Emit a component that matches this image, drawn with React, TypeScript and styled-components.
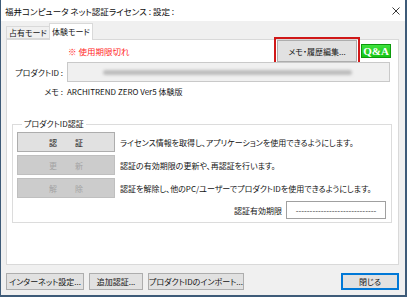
import React from "react";
import styled, { createGlobalStyle } from "styled-components";

const Global = createGlobalStyle`
  html, body { margin: 0; padding: 0; background: #ffffff; }
  body {
    font-family: "Noto Sans CJK JP", "Noto Sans", sans-serif;
    font-size: 8px;
    color: #141414;
  }
  * { box-sizing: border-box; }
`;

const Window = styled.div`
  width: 407px;
  height: 297px;
  display: flex;
  flex-direction: column;
  background: #f0f0f0;
  border-left: 1px solid #3e5b78;
  border-right: 2px solid #3e5b78;
  border-bottom: 2px solid #3e5b78;
  font-feature-settings: "palt";
  overflow: hidden;
`;

const TitleBar = styled.div`
  height: 21px;
  flex: none;
  background: #ffffff;
  display: flex;
  align-items: center;
  justify-content: space-between;
  padding: 0 5px 0 4px;
  font-size: 8.5px;
  color: #0c0c0c;
`;

const CloseIcon = styled.svg`
  width: 8px;
  height: 8px;
  display: block;
`;

const Body = styled.div`
  flex: 1;
  display: flex;
  flex-direction: column;
  padding: 2px 6px 0 5px;
`;

const TabStrip = styled.div`
  height: 16px;
  display: flex;
  align-items: flex-end;
  position: relative;
  z-index: 1;
`;

const Tab = styled.div<{ $active?: boolean }>`
  width: ${(p) => (p.$active ? 44 : 43)}px;
  height: ${(p) => (p.$active ? 17 : 13)}px;
  margin-bottom: ${(p) => (p.$active ? -1 : 0)}px;
  display: flex;
  align-items: center;
  justify-content: center;
  background: ${(p) => (p.$active ? "#ffffff" : "#f0f0f0")};
  border: 1px solid #d9d9d9;
  border-bottom: ${(p) => (p.$active ? "none" : "1px solid #d9d9d9")};
  ${(p) => (p.$active ? "" : "border-right: none;")}
  padding-bottom: ${(p) => (p.$active ? 2 : 0)}px;
`;

const Panel = styled.div`
  height: 226px;
  background: #ffffff;
  border: 1px solid #d9d9d9;
  display: flex;
  flex-direction: column;
`;

const TopRow = styled.div`
  height: 22px;
  display: flex;
  align-items: center;
  padding: 0 7px 0 61px;
`;

const Expired = styled.span`
  color: #ff2626;
  font-size: 8.5px;
  flex: 1;
`;

const Button = styled.button<{ $w: number; $h?: number; $disabled?: boolean; $spread?: number; $focus?: boolean; $mark?: boolean }>`
  width: ${(p) => p.$w}px;
  height: ${(p) => p.$h ?? 20}px;
  padding: 0 0 0 ${(p) => p.$spread ?? 0}px;
  margin: 0;
  font-family: inherit;
  font-size: 8px;
  font-feature-settings: "palt";
  letter-spacing: ${(p) => p.$spread ?? 0}px;
  color: ${(p) => (p.$disabled ? "#a3a3a3" : "#141414")};
  background: ${(p) => (p.$disabled ? "#cccccc" : "#e1e1e1")};
  border: 1px solid ${(p) => (p.$focus ? "#0078d7" : p.$disabled ? "#bfbfbf" : "#adadad")};
  box-shadow: ${(p) => (p.$focus ? "inset 0 0 0 1px #0078d7" : "none")};
  display: flex;
  align-items: center;
  justify-content: center;
  white-space: nowrap;
  flex: none;
  ${(p) => (p.$mark ? "outline: 2px solid #d01818; outline-offset: 1px;" : "")}
`;

const QA = styled.div`
  width: 30px;
  height: 14px;
  margin-left: 4px;
  background: linear-gradient(#3ee23e, #15c415);
  border: 1px solid #0c9a0c;
  color: #ffffff;
  font-family: "Liberation Serif", "DejaVu Serif", serif;
  font-weight: bold;
  font-size: 11px;
  line-height: 12px;
  display: flex;
  align-items: center;
  justify-content: center;
  flex: none;
`;

const FieldGrid = styled.div`
  display: grid;
  grid-template-columns: 48px 1fr;
  grid-template-rows: 20px 18px;
  column-gap: 4px;
  align-items: center;
  margin: 0 8px 0 8px;
`;

const FieldLabel = styled.span`
  text-align: right;
  white-space: nowrap;
`;

const IdInput = styled.div`
  height: 20px;
  background: #f0f0f0;
  border: 1px solid #c9c9c9;
  display: flex;
  align-items: center;
  padding-left: 35px;
`;

const Redacted = styled.div`
  width: 249px;
  height: 5px;
  background: #bcbcbc;
  border-radius: 3px;
  filter: blur(1.6px);
`;

const Group = styled.fieldset`
  margin: 19px 6px 0 5px;
  padding: 3px 5px 3px 4px;
  border: 1px solid #dcdcdc;
  min-width: 0;
`;

const Legend = styled.legend`
  margin-left: 5px;
  padding: 0 2px;
  font-size: 8px;
  line-height: 10px;
  height: 10px;
`;

const Actions = styled.div`
  display: grid;
  grid-template-columns: 98px 1fr;
  grid-auto-rows: 20px;
  row-gap: 3px;
  column-gap: 5px;
  align-items: center;
`;

const Desc = styled.span`
  white-space: nowrap;
`;

const ExpiryRow = styled.div`
  margin-top: 3px;
  display: flex;
  justify-content: flex-end;
  align-items: center;
  gap: 4px;
`;

const ExpiryBox = styled.div`
  width: 100px;
  height: 18px;
  background: #ffffff;
  border: 1px solid #a0a0a0;
  display: flex;
  align-items: center;
  justify-content: center;
  color: #333;
`;

const Footer = styled.div`
  margin-top: 8px;
  display: flex;
  align-items: center;
  gap: 5px;
`;

const Spacer = styled.div`
  flex: 1;
`;

export default function App() {
  return (
    <>
      <Global />
      <Window>
        <TitleBar>
          <span>福井コンピュータ ネット認証ライセンス : 設定 :</span>
          <CloseIcon viewBox="0 0 8 8">
            <path d="M0.5 0.5 L7.5 7.5 M7.5 0.5 L0.5 7.5" stroke="#222" strokeWidth="0.9" fill="none" />
          </CloseIcon>
        </TitleBar>
        <Body>
          <TabStrip>
            <Tab>占有モード</Tab>
            <Tab $active>体験モード</Tab>
          </TabStrip>
          <Panel>
            <TopRow>
              <Expired>※ 使用期限切れ</Expired>
              <Button $w={80} $h={22} $mark>
                メモ・履歴編集...
              </Button>
              <QA>Q&amp;A</QA>
            </TopRow>
            <FieldGrid>
              <FieldLabel>プロダクトID :</FieldLabel>
              <IdInput>
                <Redacted />
              </IdInput>
              <FieldLabel>メモ :</FieldLabel>
              <span>ARCHITREND ZERO Ver5 体験版</span>
            </FieldGrid>
            <Group>
              <Legend>プロダクトID認証</Legend>
              <Actions>
                <Button $w={98} $spread={18}>認証</Button>
                <Desc>ライセンス情報を取得し、アプリケーションを使用できるようにします。</Desc>
                <Button $w={98} $spread={18} $disabled>更新</Button>
                <Desc>認証の有効期限の更新や、再認証を行います。</Desc>
                <Button $w={98} $spread={18} $disabled>解除</Button>
                <Desc>認証を解除し、他のPC/ユーザーでプロダクトIDを使用できるようにします。</Desc>
              </Actions>
              <ExpiryRow>
                <span>認証有効期限</span>
                <ExpiryBox>-----------------------------</ExpiryBox>
              </ExpiryRow>
            </Group>
          </Panel>
          <Footer>
            <Button $w={78} $h={17}>インターネット設定...</Button>
            <Button $w={54} $h={17}>追加認証...</Button>
            <Button $w={96} $h={17}>プロダクトIDのインポート...</Button>
            <Spacer />
            <Button $w={58} $h={17} $focus>閉じる</Button>
          </Footer>
        </Body>
      </Window>
    </>
  );
}
